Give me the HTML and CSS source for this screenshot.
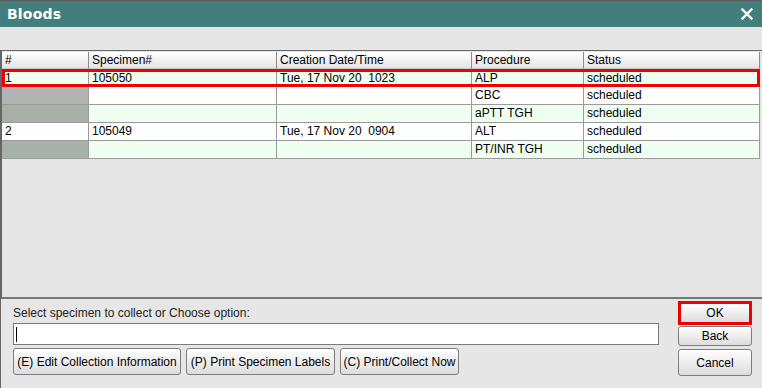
FILE: index.html
```html
<!DOCTYPE html>
<html>
<head>
<meta charset="utf-8">
<link rel="stylesheet" href="styles.css">
</head>
<body>
<div class="window">
  <div class="titlebar">
    <span class="title">Bloods</span>
    <svg class="close" width="12" height="12" viewBox="0 0 12 12"><path d="M1.5 1.5 L10.5 10.5 M10.5 1.5 L1.5 10.5" stroke="#fff" stroke-width="2.4" stroke-linecap="square"/></svg>
  </div>
  <div class="toolbar"></div>
  <div class="pane">
    <div class="grid">
      <div class="row head">
        <div class="c">#</div><div class="c">Specimen#</div><div class="c">Creation Date/Time</div><div class="c">Procedure</div><div class="c">Status</div>
      </div>
      <div class="row mint sel">
        <div class="c">1</div><div class="c">105050</div><div class="c">Tue, 17 Nov 20&nbsp; 1023</div><div class="c">ALP</div><div class="c">scheduled</div>
      </div>
      <div class="row white">
        <div class="c g1"></div><div class="c"></div><div class="c"></div><div class="c">CBC</div><div class="c">scheduled</div>
      </div>
      <div class="row mint">
        <div class="c g2"></div><div class="c"></div><div class="c"></div><div class="c">aPTT TGH</div><div class="c">scheduled</div>
      </div>
      <div class="row white">
        <div class="c">2</div><div class="c">105049</div><div class="c">Tue, 17 Nov 20&nbsp; 0904</div><div class="c">ALT</div><div class="c">scheduled</div>
      </div>
      <div class="row mint">
        <div class="c g2"></div><div class="c"></div><div class="c"></div><div class="c">PT/INR TGH</div><div class="c">scheduled</div>
      </div>
    </div>
  </div>
  <div class="bottom">
    <div class="left">
      <div class="label">Select specimen to collect or Choose option:</div>
      <div class="input"><span class="caret"></span></div>
      <div class="btnrow">
        <button class="btn w-edit">(E) Edit Collection Information</button>
        <button class="btn w-print">(P) Print Specimen Labels</button>
        <button class="btn w-collect">(C) Print/Collect Now</button>
      </div>
    </div>
    <div class="right">
      <button class="btn ok">OK</button>
      <button class="btn back">Back</button>
      <button class="btn cancel">Cancel</button>
    </div>
  </div>
</div>
</body>
</html>
```

FILE: styles.css
```css
* { box-sizing: border-box; }
html, body { margin: 0; padding: 0; }
body {
  width: 762px;
  height: 388px;
  overflow: hidden;
  background: #e6e6e6;
  font-family: "Liberation Sans", Arial, sans-serif;
  font-size: 12px;
  color: #000;
}
.window {
  width: 762px;
  height: 388px;
  border-top: 1px solid #5a5a5a;
  display: flex;
  flex-direction: column;
  background: #e6e6e6;
}
.titlebar {
  height: 26px;
  background: #427e7c;
  display: flex;
  align-items: center;
  justify-content: space-between;
  padding: 0 9px 0 7px;
}
.title {
  color: #fff;
  font-weight: bold;
  font-size: 14px;
  font-family: "DejaVu Sans", "Liberation Sans", sans-serif;
  letter-spacing: 0.2px;
}
.close { display: block; }
.toolbar {
  height: 23px;
  background: #e6e6e6;
}
.pane {
  height: 249px;
  border-left: 2px solid #666;
  border-top: 1px solid #666;
  border-bottom: 2px solid #777;
  background: #e6e6e6;
}
.grid { width: 758px; padding-top: 1px; }
.row {
  display: grid;
  grid-template-columns: 87px 188px 195px 112px 176px;
  height: 18px;
}
.row .c {
  border-right: 1px solid #9a9a9a;
  border-bottom: 1px solid #9a9a9a;
  padding: 0 3px;
  line-height: 17px;
  white-space: nowrap;
  overflow: hidden;
}
.row.head { height: 17px; }
.row.head .c {
  background: linear-gradient(#ffffff, #e4e4e4);
  border-right: 1px solid #8a8a8a;
  border-bottom: 1px solid #c8c8c8;
  line-height: 16px;
}
.row.mint .c { background: #eefff1; }
.row.white .c { background: #ffffff; }
.row .c.g1 { background: #b3b3b3; }
.row .c.g2 { background: #a7b1a8; }
.row.sel {
  outline: 3px solid #ee0000;
  outline-offset: -3px;
  position: relative;
}
.row.sel .c { line-height: 18px; }
.bottom {
  flex: 1;
  display: flex;
  justify-content: space-between;
  padding: 0 10px 0 12px;
  border-left: 1px solid #666;
}
.left { width: 646px; padding-top: 6px; }
.label { height: 18px; line-height: 16px; color: #222; }
.input {
  height: 22px;
  background: #fff;
  border: 1px solid #7a7a7a;
  position: relative;
}
.caret {
  position: absolute;
  left: 2px;
  top: 3px;
  width: 1px;
  height: 15px;
  background: #000;
}
.btnrow {
  display: flex;
  gap: 5px;
  margin-top: 3px;
}
.btn {
  font-family: "Liberation Sans", Arial, sans-serif;
  font-size: 12px;
  color: #000;
  background: linear-gradient(#ffffff, #dcdcdc);
  border: 1px solid #7d7d7d;
  border-radius: 3px;
  height: 27px;
  padding: 0;
  text-align: center;
}
.w-edit { width: 168px; }
.w-print { width: 149px; }
.w-collect { width: 119px; }
.right {
  width: 74px;
  display: flex;
  flex-direction: column;
  padding-top: 2px;
}
.ok {
  height: 24px;
  border: 3px solid #ee0000;
  border-radius: 0;
}
.back { height: 20px; margin-top: 1px; }
.cancel { height: 27px; margin-top: 3px; }
```
